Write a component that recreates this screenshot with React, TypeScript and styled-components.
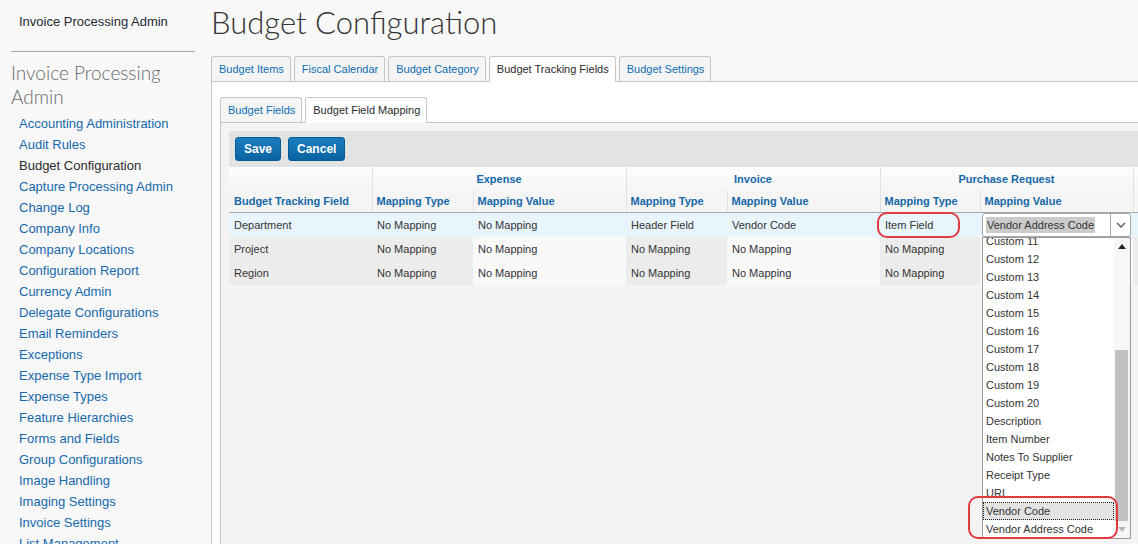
import React from 'react';
import styled, { createGlobalStyle, css } from 'styled-components';

const GlobalStyle = createGlobalStyle`
  html, body { margin: 0; padding: 0; background: #f8f8f8; }
  body { font-family: "Liberation Sans", Arial, sans-serif; overflow: hidden; }
  * { box-sizing: border-box; }
`;

const Page = styled.div`
  position: relative;
  width: 1138px;
  height: 544px;
  overflow: hidden;
  display: grid;
  grid-template-columns: 211px 1fr;
  background: #f8f8f8;
`;

const Sidebar = styled.aside`
  padding-top: 14px;
  display: flex;
  flex-direction: column;
`;

const AppTitle = styled.div`
  padding-left: 19px;
  font-size: 13px;
  line-height: 15px;
  color: #262a33;
`;

const Rule = styled.hr`
  margin: 22px 0 0 11px;
  width: 184px;
  height: 0;
  border: 0;
  border-top: 1px solid #a8a8a8;
`;

const SideHeading = styled.h2`
  margin: 9px 0 0 11px;
  width: 175px;
  font-family: Lato, "Open Sans", sans-serif;
  font-weight: 300;
  font-size: 19px;
  line-height: 24px;
  color: #6b6b6b;
`;

const NavList = styled.ul`
  list-style: none;
  margin: 4px 0 0;
  padding: 0 0 0 19px;
`;

const NavItem = styled.li<{ $active?: boolean }>`
  font-size: 13px;
  line-height: 21px;
  white-space: nowrap;
  color: ${(p) => (p.$active ? '#2b2b2b' : '#1668ad')};
`;

const Main = styled.main`
  display: flex;
  flex-direction: column;
  min-width: 0;
`;

const Heading = styled.h1`
  margin: 0;
  height: 56px;
  font-family: Lato, "Open Sans", sans-serif;
  font-weight: 300;
  font-size: 31px;
  line-height: 44px;
  color: #333;
  white-space: nowrap;
`;

const TabStrip = styled.div`
  display: flex;
  align-items: flex-end;
  gap: 3px;
  height: 25px;
  position: relative;
  z-index: 1;
`;

const Tab = styled.div<{ $active?: boolean }>`
  height: 25px;
  padding: 0 6px 0 7px;
  border: 1px solid #c6c6c6;
  border-bottom: 0;
  border-radius: 3px 3px 0 0;
  background: #f5f5f5;
  font-size: 11px;
  line-height: 24px;
  color: #0f6db4;
  white-space: nowrap;
  ${(p) =>
    p.$active &&
    css`
      height: 26px;
      margin-bottom: -1px;
      background: #fff;
      color: #2b2b2b;
    `}
`;

const Panel = styled.section`
  flex: 1;
  display: flex;
  flex-direction: column;
  background: #fff;
  border: 1px solid #c6c6c6;
  border-right: 0;
  padding: 15px 0 0 8px;
`;

const SubPanel = styled.div`
  flex: 1;
  background: #f4f4f4;
  border: 1px solid #c6c6c6;
  border-right: 0;
  padding: 8px 0 0 8px;
`;

const Toolbar = styled.div`
  display: flex;
  gap: 7px;
  height: 36px;
  padding: 6px;
  background: #e2e3e3;
  width: 960px;
`;

const Button = styled.button`
  height: 24px;
  padding: 0 8px;
  border: 1px solid #0a5a92;
  border-radius: 3px;
  background: linear-gradient(#1b7dc1, #0a63a1);
  color: #fff;
  font-family: "Liberation Sans", Arial, sans-serif;
  font-weight: bold;
  font-size: 12px;
`;

const Table = styled.table`
  border-collapse: collapse;
  table-layout: fixed;
  width: 960px;
  font-size: 11px;
`;

const GroupCell = styled.th`
  height: 23px;
  padding: 0 5px;
  background: linear-gradient(#fdfdfd, #f6f6f6);
  border-left: 1px solid #e2e2e2;
  color: #1567a8;
  font-weight: bold;
  text-align: center;
  &:first-child { border-left: 0; }
`;

const HeadCell = styled.th`
  height: 22px;
  padding: 0 4px;
  background: #f5f5f5;
  border-left: 1px solid #e2e2e2;
  border-bottom: 1px solid #a9a9a9;
  color: #1567a8;
  font-weight: bold;
  text-align: left;
  white-space: nowrap;
  &:first-child { border-left: 0; padding-left: 5px; }
`;

const Cell = styled.td<{ $light?: boolean; $selected?: boolean }>`
  height: 24px;
  padding: 0 5px;
  color: #333;
  white-space: nowrap;
  background: ${(p) => (p.$selected ? '#e9f5fd' : p.$light ? '#f9f9f9' : '#ececec')};
`;

const EditCell = styled.td`
  position: relative;
  height: 24px;
  padding: 0 2px 0 2px;
  background: #e9f5fd;
`;

const SelectBox = styled.div`
  display: flex;
  height: 24px;
  border: 1px solid #a6a6a6;
  border-radius: 3px;
  background: #fff;
`;

const SelectValue = styled.div`
  flex: 1;
  padding-left: 3px;
  display: flex;
  align-items: center;
  color: #333;
  white-space: nowrap;
`;

const Highlight = styled.span`
  background: #cbcbcb;
  line-height: 16px;
  padding: 0 1px;
`;

const SelectArrow = styled.div`
  width: 20px;
  border-left: 1px solid #a6a6a6;
  display: flex;
  align-items: center;
  justify-content: center;
`;

const DropList = styled.div`
  position: absolute;
  top: 24px;
  left: 2px;
  width: 149px;
  height: 302px;
  border: 1px solid #9a9a9a;
  background: #fff;
  display: flex;
  overflow: hidden;
  z-index: 5;
`;

const Options = styled.div`
  flex: 1;
  overflow: hidden;
`;

const OptionList = styled.div`
  margin-top: -6px;
`;

const Option = styled.div<{ $focused?: boolean }>`
  height: 18px;
  line-height: 18px;
  padding-left: 3px;
  font-size: 11px;
  color: #333;
  white-space: nowrap;
  ${(p) =>
    p.$focused &&
    css`
      background: #e3e3e3;
      outline: 1px dotted #222;
      outline-offset: -1px;
    `}
`;

const Scrollbar = styled.div`
  width: 16px;
  display: flex;
  flex-direction: column;
  background: #f7f7f7;
`;

const ScrollButton = styled.div`
  height: 17px;
  display: flex;
  align-items: center;
  justify-content: center;
`;

const Track = styled.div`
  flex: 1;
  padding: 95px 2px 0 1px;
`;

const Thumb = styled.div`
  height: 171px;
  background: #c1c1c1;
`;

const Annotation = styled.div`
  position: absolute;
  border: 2px solid #e23a41;
  border-radius: 10px;
  pointer-events: none;
  z-index: 10;
`;

const navItems = [
  'Accounting Administration',
  'Audit Rules',
  'Budget Configuration',
  'Capture Processing Admin',
  'Change Log',
  'Company Info',
  'Company Locations',
  'Configuration Report',
  'Currency Admin',
  'Delegate Configurations',
  'Email Reminders',
  'Exceptions',
  'Expense Type Import',
  'Expense Types',
  'Feature Hierarchies',
  'Forms and Fields',
  'Group Configurations',
  'Image Handling',
  'Imaging Settings',
  'Invoice Settings',
  'List Management',
];

const topTabs = ['Budget Items', 'Fiscal Calendar', 'Budget Category', 'Budget Tracking Fields', 'Budget Settings'];
const subTabs = ['Budget Fields', 'Budget Field Mapping'];

const options = [
  'Custom 11', 'Custom 12', 'Custom 13', 'Custom 14', 'Custom 15', 'Custom 16', 'Custom 17',
  'Custom 18', 'Custom 19', 'Custom 20', 'Description', 'Item Number', 'Notes To Supplier',
  'Receipt Type', 'URL', 'Vendor Code', 'Vendor Address Code',
];

const colWidths = [143, 101, 153, 101, 153, 100, 153, 56];

const rows = [
  { name: 'Project', vals: ['No Mapping', 'No Mapping', 'No Mapping', 'No Mapping', 'No Mapping'] },
  { name: 'Region', vals: ['No Mapping', 'No Mapping', 'No Mapping', 'No Mapping', 'No Mapping'] },
];

export default function App() {
  return (
    <>
      <GlobalStyle />
      <Page>
        <Sidebar>
          <AppTitle>Invoice Processing Admin</AppTitle>
          <Rule />
          <SideHeading>Invoice Processing Admin</SideHeading>
          <NavList>
            {navItems.map((n) => (
              <NavItem key={n} $active={n === 'Budget Configuration'}>{n}</NavItem>
            ))}
          </NavList>
        </Sidebar>
        <Main>
          <Heading>Budget Configuration</Heading>
          <TabStrip>
            {topTabs.map((t) => (
              <Tab key={t} $active={t === 'Budget Tracking Fields'}>{t}</Tab>
            ))}
          </TabStrip>
          <Panel>
            <TabStrip>
              {subTabs.map((t) => (
                <Tab key={t} $active={t === 'Budget Field Mapping'}>{t}</Tab>
              ))}
            </TabStrip>
            <SubPanel>
              <Toolbar>
                <Button>Save</Button>
                <Button>Cancel</Button>
              </Toolbar>
              <Table>
                <colgroup>
                  {colWidths.map((w, i) => (
                    <col key={i} style={{ width: w }} />
                  ))}
                </colgroup>
                <thead>
                  <tr>
                    <GroupCell />
                    <GroupCell colSpan={2}>Expense</GroupCell>
                    <GroupCell colSpan={2}>Invoice</GroupCell>
                    <GroupCell colSpan={2}>Purchase Request</GroupCell>
                    <GroupCell />
                  </tr>
                  <tr>
                    <HeadCell>Budget Tracking Field</HeadCell>
                    <HeadCell>Mapping Type</HeadCell>
                    <HeadCell>Mapping Value</HeadCell>
                    <HeadCell>Mapping Type</HeadCell>
                    <HeadCell>Mapping Value</HeadCell>
                    <HeadCell>Mapping Type</HeadCell>
                    <HeadCell>Mapping Value</HeadCell>
                    <HeadCell />
                  </tr>
                </thead>
                <tbody>
                  <tr>
                    <Cell $selected>Department</Cell>
                    <Cell $selected>No Mapping</Cell>
                    <Cell $selected>No Mapping</Cell>
                    <Cell $selected>Header Field</Cell>
                    <Cell $selected>Vendor Code</Cell>
                    <Cell $selected>Item Field</Cell>
                    <EditCell>
                      <SelectBox>
                        <SelectValue>
                          <Highlight>Vendor Address Code</Highlight>
                        </SelectValue>
                        <SelectArrow>
                          <svg width="10" height="6" viewBox="0 0 10 6">
                            <path d="M1 1 L5 5 L9 1" fill="none" stroke="#555" strokeWidth="1.3" />
                          </svg>
                        </SelectArrow>
                      </SelectBox>
                      <DropList>
                        <Options>
                          <OptionList>
                            {options.map((o) => (
                              <Option key={o} $focused={o === 'Vendor Code'}>{o}</Option>
                            ))}
                          </OptionList>
                        </Options>
                        <Scrollbar>
                          <ScrollButton>
                            <svg width="8" height="5" viewBox="0 0 8 5">
                              <polygon points="0,5 4,0 8,5" fill="#222" />
                            </svg>
                          </ScrollButton>
                          <Track>
                            <Thumb />
                          </Track>
                          <ScrollButton>
                            <svg width="8" height="5" viewBox="0 0 8 5">
                              <polygon points="0,0 8,0 4,5" fill="#b5b5b5" />
                            </svg>
                          </ScrollButton>
                        </Scrollbar>
                      </DropList>
                    </EditCell>
                    <Cell $selected />
                  </tr>
                  {rows.map((r) => (
                    <tr key={r.name}>
                      <Cell>{r.name}</Cell>
                      <Cell>{r.vals[0]}</Cell>
                      <Cell $light>{r.vals[1]}</Cell>
                      <Cell>{r.vals[2]}</Cell>
                      <Cell $light>{r.vals[3]}</Cell>
                      <Cell>{r.vals[4]}</Cell>
                      <Cell $light />
                      <Cell />
                    </tr>
                  ))}
                </tbody>
              </Table>
            </SubPanel>
          </Panel>
        </Main>
        <Annotation style={{ left: 877, top: 212, width: 83, height: 26 }} />
        <Annotation style={{ left: 968, top: 496, width: 150, height: 43 }} />
      </Page>
    </>
  );
}
